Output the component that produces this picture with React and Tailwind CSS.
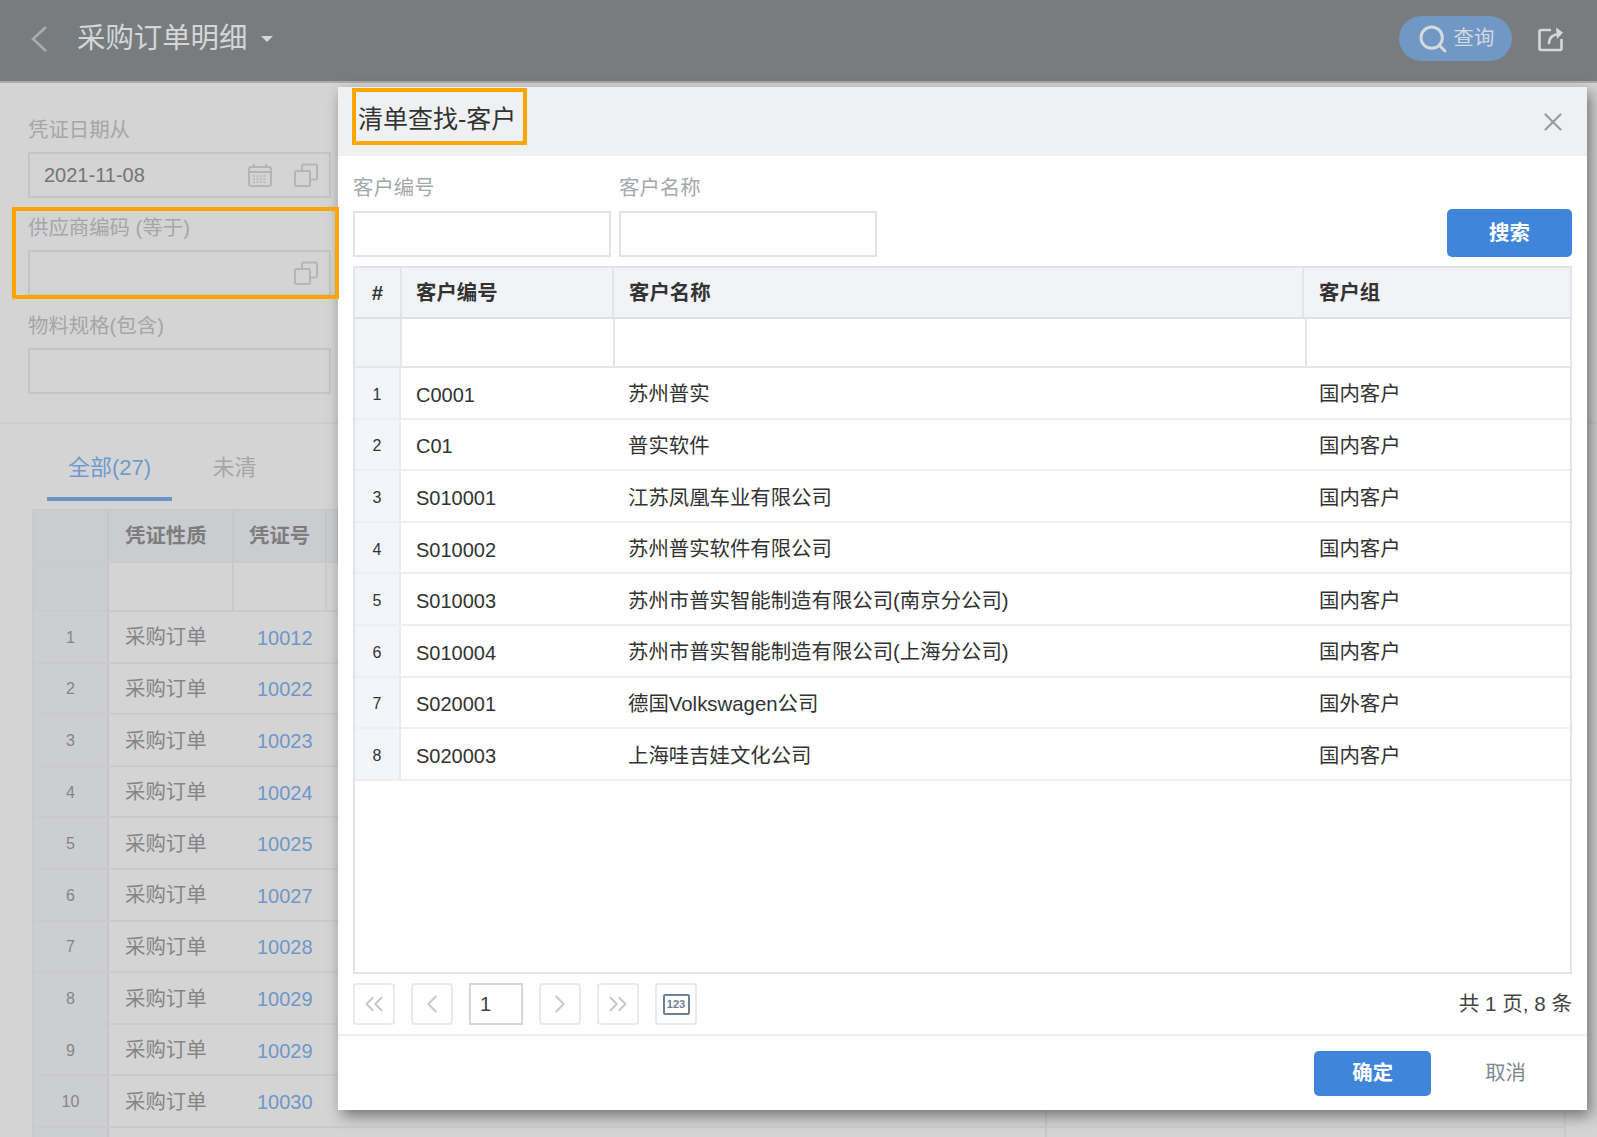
import { X, Search, ChevronLeft, ChevronRight, ChevronsLeft, ChevronsRight } from 'lucide-react';

const font = 'font-["Liberation_Sans","Noto_Sans_CJK_SC",sans-serif]';

const orders = [
    ['1', '10012'],
    ['2', '10022'],
    ['3', '10023'],
    ['4', '10024'],
    ['5', '10025'],
    ['6', '10027'],
    ['7', '10028'],
    ['8', '10029'],
    ['9', '10029'],
    ['10', '10030'],
    ['', ''],
];

const customers = [
    ['1', 'C0001', '苏州普实', '国内客户'],
    ['2', 'C01', '普实软件', '国内客户'],
    ['3', 'S010001', '江苏凤凰车业有限公司', '国内客户'],
    ['4', 'S010002', '苏州普实软件有限公司', '国内客户'],
    ['5', 'S010003', '苏州市普实智能制造有限公司(南京分公司)', '国内客户'],
    ['6', 'S010004', '苏州市普实智能制造有限公司(上海分公司)', '国内客户'],
    ['7', 'S020001', '德国Volkswagen公司', '国外客户'],
    ['8', 'S020003', '上海哇吉娃文化公司', '国内客户'],
];

const CopyIcon = () => (
    <svg width="25" height="25" viewBox="0 0 25 25" fill="none" stroke="#b5b5b5" strokeWidth="2">
        <rect x="1" y="8" width="15" height="15" rx="1.5" />
        <path d="M8 8V3a1.5 1.5 0 0 1 1.5-1.5h12A1.5 1.5 0 0 1 23 3v12a1.5 1.5 0 0 1-1.5 1.5H16" />
    </svg>
);

const CalendarIcon = () => (
    <svg width="24" height="24" viewBox="0 0 24 24" fill="none" stroke="#b5b5b5" strokeWidth="2">
        <rect x="1" y="4" width="22" height="19" rx="2" />
        <path d="M1 9h22M6 1v4M18 1v4" />
        <path d="M5 13h14M5 16h14M5 19h14" strokeDasharray="2 1.5" strokeWidth="1.6" />
    </svg>
);

const ShareIcon = () => (
    <svg width="26" height="26" viewBox="0 0 26 26" fill="none" stroke="#d6d7d8" strokeWidth="2.6" strokeLinejoin="round">
        <path d="M13 4H3a1.5 1.5 0 0 0-1.5 1.5v17A1.5 1.5 0 0 0 3 24h19a1.5 1.5 0 0 0 1.5-1.5V13" />
        <path d="M11 17c.3-5 3-8.500 10-9" strokeLinecap="round" />
        <path d="M18 1.500 25 6.500 19 13z" fill="#d6d7d8" stroke="none" />
    </svg>
);

const BackIcon = () => (
    <svg width="18" height="28" viewBox="0 0 18 28" fill="none" stroke="#a9abad" strokeWidth="2.6">
        <path d="M16 2 3 14 16 26" />
    </svg>
);

const Field = ({ label, value, calendar }) => (
    <div className="h-[98px] w-[303px]">
        <div className="h-[36px] pt-[2px] text-[20.4px] leading-[24px] text-[#a6a6a6]">{label}</div>
        <div className="h-[46px] flex items-center border-2 border-[#c5c5c5] pl-[14px] pr-[10px] text-[20px] text-[#757575]">
            <span className="flex-1">{value}</span>
            {calendar && <span className="mr-[22px] flex"><CalendarIcon /></span>}
            {(calendar || label.startsWith('供应商')) && <CopyIcon />}
        </div>
    </div>
);

const PageButton = ({ children, className = '' }) => (
    <div className={`w-[42px] h-[42px] flex items-center justify-center border-2 border-[#e9eaee] rounded-[4px] text-[#c6c8cc] ${className}`}>
        {children}
    </div>
);

const App = () => {
    return (
        <div className={`relative w-[1597px] h-[1137px] overflow-hidden bg-[#d4d4d4] ${font}`}>
            {/* Header */}
            <div className="h-[83px] pb-[4px] flex items-center bg-[#797c7f] border-b-2 border-[#a9abad]">
                <span className="ml-[30px] mr-[29px] flex"><BackIcon /></span>
                <span className="text-[28.4px] text-[#d5d6d7]">采购订单明细</span>
                <span className="ml-[14px] w-0 h-0 border-x-[6px] border-x-transparent border-t-[6px] border-t-[#d5d6d7]" />
                <div className="ml-auto w-[113px] h-[45px] flex items-center justify-center gap-[5px] rounded-full bg-[#7197c5] text-[20.4px] text-[#d3d9df]">
                    <Search size={32} strokeWidth={2.2} className="text-[#d6dade]" />
                    <span>查询</span>
                </div>
                <div className="ml-[26px] mr-[33px] flex"><ShareIcon /></div>
            </div>

            {/* Filters */}
            <div className="pt-[33px] pl-[28px] pb-[28px] border-b-2 border-[#cdcdcd]">
                <Field label="凭证日期从" value="2021-11-08" calendar />
                <Field label="供应商编码 (等于)" />
                <div className="h-[82px] w-[303px]">
                    <div className="h-[36px] pt-[2px] text-[20.4px] leading-[24px] text-[#a6a6a6]">物料规格(包含)</div>
                    <div className="h-[46px] border-2 border-[#c5c5c5]" />
                </div>
            </div>

            {/* Tabs */}
            <div className="ml-[47px] mt-[29px] flex text-[22px] leading-[28px]">
                <div className="w-[125px] h-[48px] pt-[1px] text-center text-[#6f9ad0] border-b-4 border-[#6a93c6]">全部(27)</div>
                <div className="w-[125px] h-[48px] pt-[1px] text-center text-[#a6a6a6]">未清</div>
            </div>

            {/* Order table behind the dialog */}
            <div className="ml-[32px] mr-[31px] mt-[8px] border-l-2 border-t-2 border-r-2 border-[#c9cacd]">
                <div className="h-[52px] flex bg-[#cbccd0] border-b-2 border-[#c9cacd] text-[20.4px] font-bold text-[#7d7d7d]">
                    <div className="w-[75px] border-r-2 border-[#c5c6ca]" />
                    <div className="w-[125px] flex items-center pl-[16px] border-r-2 border-[#c5c6ca]">凭证性质</div>
                    <div className="w-[93px] flex items-center pl-[15px] border-r-2 border-[#c5c6ca]">凭证号</div>
                </div>
                <div className="h-[49px] flex border-b-2 border-[#c9cacd]">
                    <div className="w-[75px] bg-[#cbccd0] border-r-2 border-[#c5c6ca]" />
                    <div className="w-[125px] border-r-2 border-[#c9cacd]" />
                    <div className="w-[93px] border-r-2 border-[#c9cacd]" />
                </div>
                {orders.map(([no, code], i) => (
                    <div key={i} className="h-[51.6px] flex border-b-2 border-[#cbcbcb] text-[20.4px] text-[#858585]">
                        <div className="w-[75px] pt-[2px] flex items-center justify-center bg-[#cdced1] border-r-2 border-[#c5c6ca] text-[16px]">{no}</div>
                        <div className="w-[125px] pt-[2px] flex items-center pl-[16px]">{no && '采购订单'}</div>
                        <div className="w-[93px] pt-[2px] flex items-center pl-[23px] text-[20px] text-[#6f97c9]">{code}</div>
                        <div className="w-[720px] border-r-2 border-[#c8c8c8] ml-auto mr-[517px]" />
                    </div>
                ))}
            </div>

            {/* Dialog */}
            <div className="absolute left-[338px] top-[87px] w-[1249px] h-[1023px] flex flex-col bg-white shadow-[4px_6px_14px_rgba(0,0,0,0.45)]">
                <div className="h-[69px] pb-[4px] shrink-0 flex items-center justify-between bg-[#eff0f2] pl-[20px] pr-[19px]">
                    <span className="text-[25px] text-[#333]">清单查找-客户</span>
                    <X size={30} strokeWidth={1.8} className="mt-[4px] text-[#9a9b9d]" />
                </div>

                <div className="flex items-end px-[15px] pt-[19px]">
                    <div className="w-[258px]">
                        <div className="h-[36px] pt-[1px] text-[20.4px] leading-[24px] text-[#a5a8ad]">客户编号</div>
                        <div className="h-[46px] border-2 border-[#e2e4ea]" />
                    </div>
                    <div className="w-[258px] ml-[8px]">
                        <div className="h-[36px] pt-[1px] text-[20.4px] leading-[24px] text-[#a5a8ad]">客户名称</div>
                        <div className="h-[46px] border-2 border-[#e2e4ea]" />
                    </div>
                    <button className="ml-auto w-[125px] h-[48px] rounded-[5px] bg-[#3f86db] text-[20.4px] font-bold text-white">搜索</button>
                </div>

                {/* Customer table */}
                <div className="mx-[15px] mt-[9px] h-[708px] shrink-0 border-2 border-[#e2e4ea] text-[20.4px] text-[#333]">
                    <div className="h-[51px] flex bg-[#f2f3f7] border-b-2 border-[#dfe0e6] font-bold">
                        <div className="w-[47px] pt-[1px] flex items-center justify-center border-r-2 border-[#e2e4ea]">#</div>
                        <div className="w-[212px] pt-[1px] flex items-center pl-[14px] border-r-2 border-[#e2e4ea]">客户编号</div>
                        <div className="w-[690px] pt-[1px] flex items-center pl-[15px] border-r-2 border-[#e2e4ea]">客户名称</div>
                        <div className="flex-1 pt-[1px] flex items-center pl-[15px]">客户组</div>
                    </div>
                    <div className="h-[49px] flex border-b-2 border-[#e5e6eb]">
                        <div className="w-[47px] bg-[#f2f3f7] border-r-2 border-[#e5e6eb]" />
                        <div className="w-[213px] border-r-2 border-[#e5e6eb]" />
                        <div className="w-[692px] border-r-2 border-[#e5e6eb]" />
                    </div>
                    {customers.map(([no, code, name, group]) => (
                        <div key={no} className="h-[51.6px] flex border-b-2 border-[#eeeff2]">
                            <div className="w-[46px] pt-[4px] flex items-center justify-center bg-[#f3f5fa] border-r-2 border-[#e8eaf0] text-[16px]">{no}</div>
                            <div className="w-[213px] pt-[4px] flex items-center pl-[15px] text-[20px]">{code}</div>
                            <div className="w-[691px] pt-[4px] flex items-center pl-[14px]">{name}</div>
                            <div className="flex-1 pt-[4px] flex items-center pl-[14px]">{group}</div>
                        </div>
                    ))}
                </div>

                {/* Pager */}
                <div className="flex items-center mt-[9px] px-[15px]">
                    <PageButton><ChevronsLeft size={30} strokeWidth={1.5} /></PageButton>
                    <PageButton className="ml-[16px]"><ChevronLeft size={30} strokeWidth={1.5} /></PageButton>
                    <div className="ml-[16px] w-[54px] h-[42px] flex items-center pl-[9px] border-2 border-[#d6d7d9] text-[20px] text-[#444]">1</div>
                    <PageButton className="ml-[16px]"><ChevronRight size={30} strokeWidth={1.5} /></PageButton>
                    <PageButton className="ml-[16px]"><ChevronsRight size={30} strokeWidth={1.5} /></PageButton>
                    <PageButton className="ml-[16px] border-[#dfe3ea]">
                        <span className="w-[27px] h-[21px] flex items-center justify-center border-2 border-[#6d7f99] rounded-[2px] text-[11px] font-bold leading-none text-[#6d7f99]">123</span>
                    </PageButton>
                    <span className="ml-auto text-[20.6px] text-[#444]">共 1 页, 8 条</span>
                </div>

                {/* Footer */}
                <div className="mt-[9px] flex-1 flex items-center border-t-2 border-[#eeeff2] pr-[61px]">
                    <button className="ml-auto w-[117px] h-[45px] rounded-[5px] bg-[#3f86db] text-[20.4px] font-bold text-white">确定</button>
                    <span className="ml-[54px] text-[20.4px] text-[#7f8790]">取消</span>
                </div>

                {/* Annotation on the title */}
                <div className="absolute left-[14px] top-[1px] w-[175px] h-[57px] border-[4px] border-[#ffa500]" />
            </div>

            {/* Annotation on the filter field */}
            <div className="absolute left-[12px] top-[207px] w-[327px] h-[92px] border-[4px] border-[#ffa500]" />
        </div>
    );
};

export default App;
